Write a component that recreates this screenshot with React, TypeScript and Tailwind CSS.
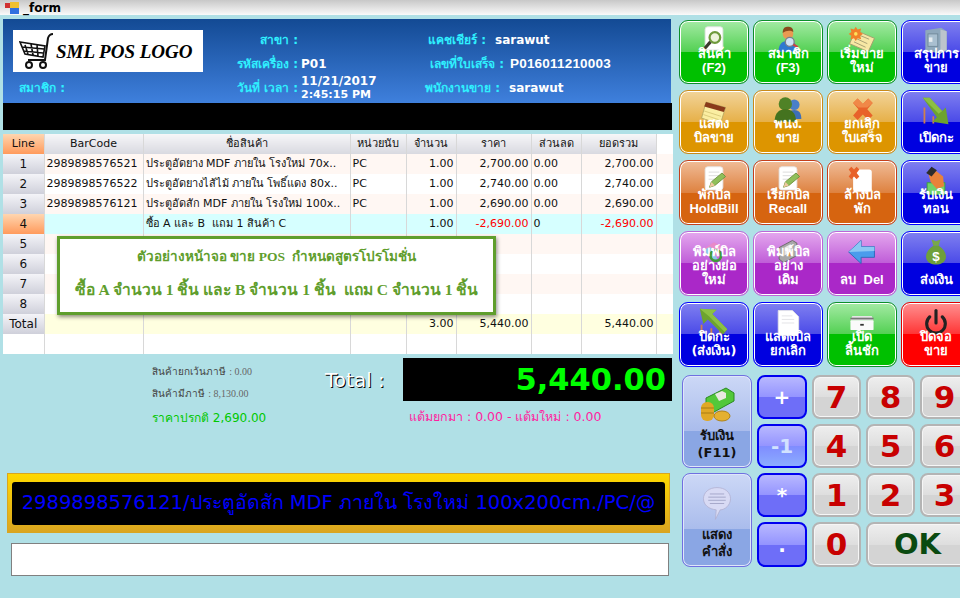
import type { ReactNode } from "react";

const thai = "font-['DejaVu_Sans','Noto_Sans','Liberation_Sans',sans-serif]";
const latin = "font-['Liberation_Sans','DejaVu_Sans',sans-serif]";

const palette = {
  green: "border-[#0d8f2a] bg-[linear-gradient(#a4eaa4_0%,#52d052_50%,#00c000_50%)]",
  amber: "border-[#c98a1a] bg-[linear-gradient(#f2d49a_0%,#e6b048_50%,#dd9500_50%)]",
  orange: "border-[#c4401c] bg-[linear-gradient(#f0bc98_0%,#de8240_50%,#d66410_50%)]",
  blue: "border-[#0000ff] bg-[linear-gradient(#8080f0_0%,#4a4ae8_50%,#0000e0_50%)]",
  purple: "border-[#bb66d8] bg-[linear-gradient(#e4a8ee_0%,#bf5cd8_50%,#aa28c8_50%)]",
  red: "border-[#e00000] bg-[linear-gradient(#ff9090_0%,#ff3434_50%,#ff0000_50%)]",
};

type Tone = keyof typeof palette;

function ActionButton({ tone, lines, icon }: { tone: Tone; lines: string[]; icon: ReactNode }) {
  return (
    <button className={`relative flex flex-col justify-end items-center rounded-[9px] border pb-[8px] shadow-[inset_0_0_0_1px_#fff] ${palette[tone]}`}>
      <span className="absolute left-1/2 top-[4px] -translate-x-1/2">{icon}</span>
      {lines.map((line) => (
        <span
          key={line}
          className={`relative whitespace-pre text-[13px] leading-[14px] font-bold text-white ${/[A-Za-z]/.test(line) ? latin : thai}`}
        >
          {line}
        </span>
      ))}
    </button>
  );
}

function Glyph({ children }: { children: ReactNode }) {
  return (
    <svg width="32" height="32" viewBox="0 0 36 36">
      {children}
    </svg>
  );
}

const DocMagnifier = (
  <Glyph>
    <rect x="8" y="2" width="20" height="26" rx="3" fill="#fff" stroke="#e2e2e2" />
    <circle cx="19" cy="14" r="6" fill="#eef3dc" stroke="#6f9a3c" strokeWidth="2.5" />
    <path d="M14 19L7 27" stroke="#3b3b2c" strokeWidth="3.5" />
  </Glyph>
);
const Member = (
  <Glyph>
    <path d="M7 30C8 20 12 18 18 18s10 3 11 12z" fill="#2f78d0" />
    <circle cx="18" cy="10" r="6" fill="#e89a52" />
    <path d="M12 9c0-6 3-7 6-7s6 1 6 6c-3-2-8-2-12 1z" fill="#8a4a1c" />
    <circle cx="20" cy="19" r="5" fill="#cfe2f6" stroke="#7b7f8c" strokeWidth="1.5" />
    <path d="M24 22l5 3" stroke="#c44" strokeWidth="2.5" />
  </Glyph>
);
const NoteFlower = (
  <Glyph>
    <path d="M11 6l21 9-7 15L4 21z" fill="#f7e7a4" stroke="#a39b6c" />
    <path d="M11 15l13 6M9 19l13 6M14 11l12 5" stroke="#a09a70" />
    <path d="M11 2l2 3 4-1-1 4 3 2-3 2 1 4-4-1-2 3-2-3-4 1 1-4-3-2 3-2-1-4 4 1z" fill="#f0802a" />
    <circle cx="11" cy="10" r="2" fill="#ffe05a" />
  </Glyph>
);
const Cabinet = (
  <Glyph>
    <path d="M6 6l18-3 6 4v21l-7 4-17-3z" fill="#8fa8bc" />
    <path d="M23 5l7 2v21l-7 4z" fill="#bcc4cc" />
    <rect x="9" y="10" width="11" height="14" fill="#a9bfd0" stroke="#6f8799" />
    <rect x="10" y="14" width="4" height="5" fill="#e6ecf0" />
  </Glyph>
);
const Notepad = (
  <Glyph>
    <path d="M9 8l22 6-6 19-21-7z" fill="#fbeea2" stroke="#b6a860" />
    <path d="M9 8l22 6-2 5-22-6z" fill="#8a3a1a" />
    <path d="M7 18l19 6M6 22l18 6" stroke="#d8c877" />
  </Glyph>
);
const Users = (
  <Glyph>
    <circle cx="25" cy="11" r="6" fill="#4a7fc8" />
    <path d="M17 27c0-7 3-10 8-10s8 3 8 10z" fill="#3d6fb8" />
    <circle cx="15" cy="10" r="7.5" fill="#4f8226" />
    <path d="M3 30c0-10 5-14 12-14s12 4 12 14z" fill="#44731f" />
  </Glyph>
);
const Cross = (
  <Glyph>
    <path d="M8 9l5-5 6 6 6-6 5 5-6 7 6 7-5 5-6-6-6 6-5-5 6-7z" fill="#e8622a" />
    <path d="M13 4l6 6 6-6 5 5-6 5H14L8 9z" fill="#f08848" />
  </Glyph>
);
const ArrowDown = (
  <Glyph>
    <path d="M5 14v18M15 24v8" stroke="#d0804a" strokeWidth="2" />
    <path d="M3 3h8l14 15 4-4 3 19-18-3 5-5z" fill="#6da32f" />
    <path d="M3 3h8l14 15-4 3z" fill="#8cc043" />
  </Glyph>
);
const DocPencil = (
  <Glyph>
    <rect x="8" y="2" width="20" height="26" rx="3" fill="#fff" stroke="#e4e4e4" />
    <path d="M12 8h12M12 12h12M12 16h8" stroke="#d8d8d8" />
    <path d="M13 25l2-6 12-10 4 4-12 10z" fill="#8fbf5a" stroke="#6c8f3a" />
    <path d="M13 25l2-6 4 4z" fill="#f0c8a0" />
  </Glyph>
);
const DocCross = (
  <Glyph>
    <rect x="8" y="5" width="21" height="25" rx="3" fill="#fff" />
    <path d="M3 5l3-3 3 3 3-3 3 3-3 4 3 4-3 3-3-3-3 3-3-3 3-4z" fill="#e8622a" />
  </Glyph>
);
const Hand = (
  <Glyph>
    <rect x="8" y="20" width="20" height="13" fill="#6fd36a" stroke="#3aa03a" />
    <path d="M9 8l7-3 10 8 1 11-8 3-7-8z" fill="#e8823a" />
    <path d="M7 9l6-7 6 4-6 7z" fill="#2c2c2c" />
  </Glyph>
);
const PrintColor = (
  <Glyph>
    <path d="M7 14l11-7 11 6-9 13z" fill="#e88ac8" />
    <path d="M6 16l8-4 8 14-4 3z" fill="#88c8e8" />
    <circle cx="20" cy="22" r="6" fill="none" stroke="#3f9a3a" strokeWidth="3" />
  </Glyph>
);
const PrintGray = (
  <Glyph>
    <path d="M8 13l15-8 5 3v14l-15 8-5-4z" fill="#a8a8a8" stroke="#666" />
    <path d="M14 13l7-4v9l-7 4z" fill="#e8e8e8" />
    <circle cx="20" cy="20" r="3" fill="#d8904a" />
  </Glyph>
);
const ArrowLeft = (
  <Glyph>
    <path d="M3 18L17 5v7h15v12H17v7z" fill="#4a9cec" stroke="#2a66b4" />
    <path d="M3 18L17 5v7h15v5z" fill="#8cc8f4" />
  </Glyph>
);
const MoneyBag = (
  <Glyph>
    <path d="M13 4l5 2 5-2-2 7h-6z" fill="#78a84a" />
    <path d="M15 11h6c6 4 9 9 8 14-1 5-6 7-11 7s-10-2-11-7c-1-5 2-10 8-14z" fill="#6ea03a" />
    <text x="18" y="28" textAnchor="middle" fontSize="15" fontWeight="700" fill="#fff" fontFamily="Liberation Sans">$</text>
  </Glyph>
);
const ArrowUp = (
  <Glyph>
    <path d="M4 32V20M15 32v-8M25 32v-6" stroke="#d0804a" strokeWidth="2" />
    <path d="M2 2l19 1-5 5 17 17-5 6-17-17-5 5z" fill="#6da32f" />
    <path d="M2 2l19 1-5 5 17 17-3 3L12 10z" fill="#8cc043" />
  </Glyph>
);
const BlankDoc = (
  <Glyph>
    <path d="M7 4h16l7 7v18l-2 3H9l-2-3z" fill="#fff" stroke="#e4e4e8" />
    <path d="M11 10h12M11 14h14M11 18h14" stroke="#e0e0e4" />
  </Glyph>
);
const Drawer = (
  <Glyph>
    <path d="M7 10h22l2 5H5z" fill="#e6e6e6" />
    <rect x="5" y="15" width="26" height="11" rx="1" fill="#fafafa" />
    <path d="M5 13h26" stroke="#777" strokeWidth="2" />
    <rect x="16" y="19" width="4" height="2" fill="#333" />
  </Glyph>
);
const Power = (
  <Glyph>
    <path d="M11 11a10.5 10.5 0 1 0 14 0" fill="none" stroke="#222" strokeWidth="3.5" strokeLinecap="round" />
    <path d="M18 4v14" stroke="#222" strokeWidth="3.5" strokeLinecap="round" />
  </Glyph>
);

const actions: { tone: Tone; lines: string[]; icon: ReactNode }[] = [
  { tone: "green", lines: ["สินค้า", "(F2)"], icon: DocMagnifier },
  { tone: "green", lines: ["สมาชิก", "(F3)"], icon: Member },
  { tone: "green", lines: ["เริ่มขาย", "ใหม่"], icon: NoteFlower },
  { tone: "blue", lines: ["สรุปการ", "ขาย"], icon: Cabinet },
  { tone: "amber", lines: ["แสดง", "บิลขาย"], icon: Notepad },
  { tone: "amber", lines: ["พนง.", "ขาย"], icon: Users },
  { tone: "amber", lines: ["ยกเลิก", "ใบเสร็จ"], icon: Cross },
  { tone: "blue", lines: ["เปิดกะ"], icon: ArrowDown },
  { tone: "orange", lines: ["พักบิล", "HoldBill"], icon: DocPencil },
  { tone: "orange", lines: ["เรียกบิล", "Recall"], icon: DocPencil },
  { tone: "orange", lines: ["ล้างบิล", "พัก"], icon: DocCross },
  { tone: "blue", lines: ["รับเงิน", "ทอน"], icon: Hand },
  { tone: "purple", lines: ["พิมพ์บิล", "อย่างย่อ", "ใหม่"], icon: PrintColor },
  { tone: "purple", lines: ["พิมพ์บิล", "อย่าง", "เดิม"], icon: PrintGray },
  { tone: "purple", lines: ["ลบ  Del"], icon: ArrowLeft },
  { tone: "blue", lines: ["ส่งเงิน"], icon: MoneyBag },
  { tone: "blue", lines: ["ปิดกะ", "(ส่งเงิน)"], icon: ArrowUp },
  { tone: "blue", lines: ["แสดงบิล", "ยกเลิก"], icon: BlankDoc },
  { tone: "green", lines: ["เปิด", "ลิ้นชัก"], icon: Drawer },
  { tone: "red", lines: ["ปิดจอ", "ขาย"], icon: Power },
];

const columns = ["Line", "BarCode", "ชื่อสินค้า", "หน่วยนับ", "จำนวน", "ราคา", "ส่วนลด", "ยอดรวม"];
const widths = ["w-[41px]", "w-[99px]", "w-[207px]", "w-[56px]", "w-[50px]", "w-[75px]", "w-[50px]", "w-[75px]"];

const rows = [
  { n: "1", code: "2989898576521", name: "ประตูอัดยาง MDF ภายใน โรงใหม่ 70x..", unit: "PC", qty: "1.00", price: "2,700.00", disc: "0.00", total: "2,700.00" },
  { n: "2", code: "2989898576522", name: "ประตูอัดยางไส้ไม้ ภายใน โพธิ์แดง 80x..", unit: "PC", qty: "1.00", price: "2,740.00", disc: "0.00", total: "2,740.00" },
  { n: "3", code: "2989898576121", name: "ประตูอัดสัก MDF ภายใน โรงใหม่ 100x..", unit: "PC", qty: "1.00", price: "2,690.00", disc: "0.00", total: "2,690.00" },
  { n: "4", code: "", name: "ซื้อ A และ B  แถม 1 สินค้า C", unit: "", qty: "1.00", price: "-2,690.00", disc: "0", total: "-2,690.00" },
  { n: "5", code: "", name: "", unit: "", qty: "", price: "", disc: "", total: "" },
  { n: "6", code: "", name: "", unit: "", qty: "", price: "", disc: "", total: "" },
  { n: "7", code: "", name: "", unit: "", qty: "", price: "", disc: "", total: "" },
  { n: "8", code: "", name: "", unit: "", qty: "", price: "", disc: "", total: "" },
  { n: "Total", code: "", name: "", unit: "", qty: "3.00", price: "5,440.00", disc: "", total: "5,440.00" },
];

function rowTone(n: string, index: number) {
  if (n === "4") return "bg-[#d6ffff]";
  if (n === "Total") return "bg-[#ffffe0]";
  return index % 2 === 0 ? "bg-[#fff7f3]" : "bg-white";
}

function SalesGrid() {
  const cell = "h-[20px] border-r border-[#d8d8d8] px-[2px] overflow-hidden whitespace-pre";
  const lineOff = "bg-[linear-gradient(#f4f4f8,#cfd0da)]";
  const lineOn = "bg-[linear-gradient(#ffd6b0,#ff9a5c)]";
  return (
    <div className="relative mt-[4px] h-[219px] w-[670px] bg-white">
      <table className={`table-fixed border-collapse text-[11px] leading-[20px] text-[#111] ${thai}`}>
        <thead>
          <tr>
            {columns.map((c, i) => (
              <th
                key={c}
                className={`${widths[i]} h-[20px] border-r border-[#d8d8d8] text-center font-normal ${i === 0 ? lineOn : "bg-[linear-gradient(#f6f6f8,#d8d9e0)]"}`}
              >
                {c}
              </th>
            ))}
            <th className="w-[17px]" />
          </tr>
        </thead>
        <tbody>
          {rows.map((r, i) => (
            <tr key={r.n} className={rowTone(r.n, i)}>
              <td className={`${cell} text-center text-[12px] ${r.n === "4" ? lineOn : lineOff}`}>{r.n}</td>
              <td className={cell}>{r.code}</td>
              <td className={cell}>{r.name}</td>
              <td className={cell}>{r.unit}</td>
              <td className={`${cell} text-right`}>{r.qty}</td>
              <td className={`${cell} text-right ${r.n === "4" ? "text-[#ff0000]" : ""}`}>{r.price}</td>
              <td className={cell}>{r.disc}</td>
              <td className={`${cell} text-right ${r.n === "4" ? "text-[#ff0000]" : ""}`}>{r.total}</td>
              <td />
            </tr>
          ))}
          <tr className="bg-white">
            <td className={cell} />
            <td className={cell} />
            <td className={cell} />
            <td className={cell} />
            <td className={cell} />
            <td className={cell} />
            <td className={cell} />
            <td className={cell} />
            <td />
          </tr>
        </tbody>
      </table>
      <div className="absolute left-[54px] top-[102px] flex h-[79px] w-[439px] flex-col items-center border-[3px] border-[#5f9e2d] bg-white pt-[6px] font-['Liberation_Serif',serif] font-bold text-[#5f9e2d] shadow-[1px_2px_4px_rgba(0,0,0,0.45)]">
        <p className="text-[13.5px] leading-[24px] whitespace-pre">ตัวอย่างหน้าจอ ขาย POS  กำหนดสูตรโปรโมชั่น</p>
        <p className="mt-[7px] text-[15.6px] leading-[28px] whitespace-pre">ซื้อ A จำนวน 1 ชิ้น และ B จำนวน 1 ชิ้น  แถม C จำนวน 1 ชิ้น</p>
      </div>
    </div>
  );
}

function Header() {
  const label = "text-[#2ff0ff] font-bold";
  return (
    <header className={`flex h-[84px] w-[668px] bg-[linear-gradient(#134a94,#3f80dd)] pl-[10px] pt-[9px] text-[12px] leading-[24px] font-bold text-white ${thai}`}>
      <div className="w-[190px]">
        <div className="mt-[2px] flex h-[42px] w-[190px] items-center bg-white pl-[6px]">
          <svg width="36" height="38" viewBox="0 0 36 38" fill="none" stroke="#111" strokeWidth="2">
            <path d="M34 2c-3 0-4 1-5 4l-3 22H9" />
            <path d="M1 10l25 4-2 11L6 22zM6 13l3 9M12 12l2 11M18 13l1 11M3 15l22 2M5 19l19 2" strokeWidth="1.6" />
            <circle cx="10" cy="33" r="3" />
            <circle cx="24" cy="33" r="3" />
          </svg>
          <span className="ml-[1px] whitespace-nowrap font-['Liberation_Serif',serif] text-[19px] italic leading-none text-black">SML POS LOGO</span>
        </div>
        <p className={`mt-[4px] pl-[6px] ${label}`}>สมาชิก :</p>
      </div>
      <div className="w-[219px]">
        <div className="flex h-[24px]">
          <span className={`w-[95px] text-right ${label}`}>สาขา :</span>
        </div>
        <div className="flex h-[24px]">
          <span className={`w-[95px] text-right ${label}`}>รหัสเครื่อง :</span>
          <span className="ml-[3px]">P01</span>
        </div>
        <div className="flex h-[24px]">
          <span className={`w-[95px] text-right ${label}`}>วันที่ เวลา :</span>
          <div className="ml-[3px] -mt-[2px] h-[28px] leading-[14px]">
            <p>11/21/2017</p>
            <p className="text-[11px]">2:45:15 PM</p>
          </div>
        </div>
      </div>
      <div>
        <div className="flex h-[24px]">
          <span className={`ml-[6px] ${label}`}>แคชเชียร์ :</span>
          <span className="ml-[9px]">sarawut</span>
        </div>
        <div className="flex h-[24px]">
          <span className={`ml-[8px] ${label}`}>เลขที่ใบเสร็จ :</span>
          <span className={`ml-[6px] text-[13.5px] tracking-[0.2px] ${latin}`}>P016011210003</span>
        </div>
        <div className="flex h-[24px]">
          <span className={`ml-[3px] ${label}`}>พนักงานขาย :</span>
          <span className="ml-[9px]">sarawut</span>
        </div>
      </div>
    </header>
  );
}

function Summary() {
  return (
    <div className={`flex h-[120px] ${thai}`}>
      <div className="w-[322px] pl-[149px] pt-[12px]">
        <p className="text-[10px] leading-[14px] text-[#444] whitespace-nowrap">
          สินค้ายกเว้นภาษี <span className="font-['Liberation_Serif',serif] text-[#666]">: 0.00</span>
        </p>
        <p className="mt-[8px] text-[10px] leading-[14px] text-[#444] whitespace-nowrap">
          สินค้ามีภาษี <span className="font-['Liberation_Serif',serif] text-[#666]">: 8,130.00</span>
        </p>
        <p className="mt-[9px] text-[12px] leading-[16px] text-[#00c800] whitespace-nowrap">ราคาปรกติ 2,690.00</p>
      </div>
      <div>
        <div className="mt-[5px] flex">
          <span className="mt-[9px] w-[78px] text-[20px] leading-[26px] text-white [text-shadow:1px_1px_0_#000]">Total :</span>
          <div className="flex h-[43px] w-[269px] items-center justify-end bg-black pr-[6px] text-[30.5px] font-bold text-[#00ff00]">5,440.00</div>
        </div>
        <p className="ml-[84px] mt-[8px] text-[12.5px] leading-[16px] text-[#ff1ea0] whitespace-nowrap">แต้มยกมา : 0.00 - แต้มใหม่ : 0.00</p>
      </div>
    </div>
  );
}

function KeyFace({ className, children, span }: { className: string; children: ReactNode; span?: string }) {
  return (
    <button className={`flex items-center justify-center rounded-[8px] ${className} ${span ?? ""}`}>
      {children}
    </button>
  );
}

const digitFace = "border-2 border-[#b4b4b4] bg-[linear-gradient(#eeeeee_0%,#dedede_50%,#d4d4d4_50%)] shadow-[inset_0_0_0_1px_#f6f6f6] font-bold";
const digit = `${digitFace} text-[31px] text-[#c80000]`;
const okKey = `${digitFace} text-[29px] text-[#0a4a10]`;
const small = "border-2 border-[#0000f0] bg-[linear-gradient(#b8b8ff_0%,#9494ff_50%,#6e6ef8_50%)] text-[20px] font-bold text-white";
const minusOne = "border-2 border-[#0000f0] bg-[linear-gradient(#b8b8ff_0%,#9494ff_50%,#7f8cff_50%,#8cacff_100%)] text-[20px] font-bold text-[#d2e2ff]";
const big = "flex-col justify-end border border-[#7070e0] bg-[linear-gradient(#ccd8f6_0%,#aabcec_60%,#8aa6e4_60%)] shadow-[inset_0_0_0_1px_#dfe6fa] pb-[6px] text-[13px] leading-[17px] font-bold text-[#111]";

function Keypad() {
  return (
    <div className={`ml-[3px] mt-[8px] grid grid-cols-[70px_50px_49px_49px_49px] grid-rows-[44px_44px_44px_45px] gap-[5px] ${thai}`}>
      <KeyFace className={big} span="row-span-2">
        <svg className="mb-[3px]" width="36" height="38" viewBox="0 0 36 38">
          <path d="M7 12L27 2l8 5v8L15 26l-8-6z" fill="#52c83a" stroke="#2a8a20" />
          <path d="M16 8l7-3 4 2v5l-7 3z" fill="#e8e8e0" />
          <rect x="2" y="16" width="13" height="19" rx="6" fill="#e0a826" />
          <path d="M2 22h13M2 27h13" stroke="#a87c14" />
          <ellipse cx="23" cy="30" rx="8" ry="5" fill="#e4b030" stroke="#b08418" />
        </svg>
        <span>รับเงิน</span>
        <span>(F11)</span>
      </KeyFace>
      <KeyFace className={small}>+</KeyFace>
      <KeyFace className={digit}>7</KeyFace>
      <KeyFace className={digit}>8</KeyFace>
      <KeyFace className={digit}>9</KeyFace>
      <KeyFace className={minusOne}>-1</KeyFace>
      <KeyFace className={digit}>4</KeyFace>
      <KeyFace className={digit}>5</KeyFace>
      <KeyFace className={digit}>6</KeyFace>
      <KeyFace className={big} span="row-span-2">
        <svg className="mb-[5px]" width="34" height="35" viewBox="0 0 36 44">
          <path d="M18 2c10 0 17 6 17 14s-7 14-13 14l-6 12 1-12C8 29 1 24 1 16S8 2 18 2z" fill="#d8daf4" stroke="#b0b0d0" />
          <path d="M9 10h18M7 14h22M7 18h22M9 22h18" stroke="#9a9cc0" />
        </svg>
        <span>แสดง</span>
        <span>คำสั่ง</span>
      </KeyFace>
      <KeyFace className={small}>*</KeyFace>
      <KeyFace className={digit}>1</KeyFace>
      <KeyFace className={digit}>2</KeyFace>
      <KeyFace className={digit}>3</KeyFace>
      <KeyFace className={small}>.</KeyFace>
      <KeyFace className={digit}>0</KeyFace>
      <KeyFace className={okKey} span="col-span-2">OK</KeyFace>
    </div>
  );
}

export default function App() {
  return (
    <div className="flex h-[598px] w-[960px] flex-col overflow-hidden bg-[#b0e0e6]">
      <div className={`flex h-[15px] items-center bg-[linear-gradient(#c8c8c8,#fafafa)] pl-[5px] text-[12px] font-bold text-black ${thai}`}>
        <svg width="15" height="12" viewBox="0 0 15 12">
          <rect x="0" y="1" width="5" height="5" fill="#d03030" />
          <rect x="5" y="0" width="9" height="6" fill="#f0c030" />
          <rect x="5" y="6" width="9" height="6" fill="#3070e0" />
        </svg>
        <span className="ml-[3px]">_form</span>
      </div>
      <div className="flex flex-1 pt-[4px]">
        <div className="ml-[3px] w-[676px]">
          <Header />
          <div className="h-[27px] w-[669px] bg-black" />
          <SalesGrid />
          <Summary />
          <div className="ml-[4px] flex h-[60px] w-[663px] items-center border border-[#d9a520] bg-[linear-gradient(#ffd800,#daa520)] px-[4px]">
            <div className={`flex h-[43px] w-full items-center justify-center rounded-[3px] bg-black text-[19.5px] whitespace-nowrap text-[#0000ff] ${thai}`}>
              2989898576121/ประตูอัดสัก MDF ภายใน โรงใหม่ 100x200cm./PC/@
            </div>
          </div>
          <div className="ml-[8px] mt-[10px] h-[33px] w-[658px] border border-[#808080] bg-white" />
        </div>
        <div className="w-[281px]">
          <div className="grid grid-cols-[70px_70px_70px_70px] grid-rows-[64px_64px_65px_65px_65px] gap-x-[4px] gap-y-[6px] pt-[1px]">
            {actions.map((a) => (
              <ActionButton key={a.lines.join()} tone={a.tone} lines={a.lines} icon={a.icon} />
            ))}
          </div>
          <Keypad />
        </div>
      </div>
    </div>
  );
}
